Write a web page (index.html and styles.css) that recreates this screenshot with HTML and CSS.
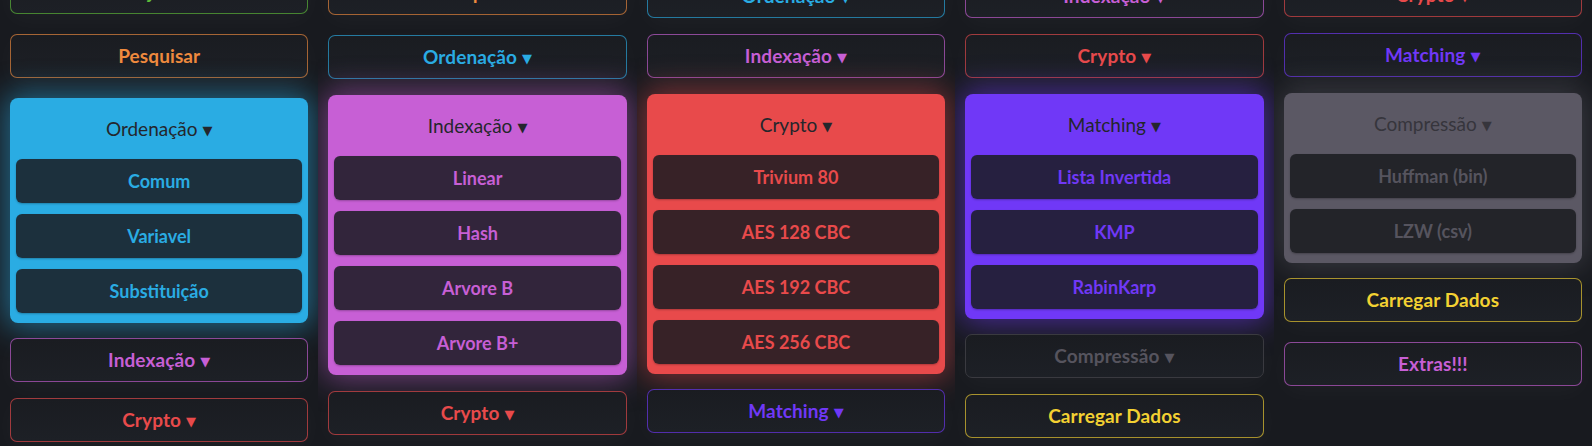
FILE: index.html
```html
<!DOCTYPE html>
<html lang="pt">
<head>
<meta charset="utf-8">
<title>Menu</title>
<link rel="stylesheet" href="styles.css">
</head>
<body>
<div class="stage">
  <section class="panel p1">
    <ul class="menu">
      <li><button class="btn c-green">Ajuda</button></li>
      <li class="plus"><button class="btn c-orange">Pesquisar</button></li>
      <li class="plus drop c-blue">
        <div class="drop-head">Ordenação <span class="caret">▼</span></div>
        <div class="drop-item">Comum</div>
        <div class="drop-item">Variavel</div>
        <div class="drop-item">Substituição</div>
      </li>
      <li><button class="btn c-magenta">Indexação <span class="caret">▼</span></button></li>
      <li><button class="btn c-red">Crypto <span class="caret">▼</span></button></li>
    </ul>
  </section>
  <section class="panel p2">
    <ul class="menu">
      <li><button class="btn c-orange">Pesquisar</button></li>
      <li class="plus"><button class="btn c-blue">Ordenação <span class="caret">▼</span></button></li>
      <li class="drop c-magenta tall">
        <div class="drop-head">Indexação <span class="caret">▼</span></div>
        <div class="drop-item">Linear</div>
        <div class="drop-item">Hash</div>
        <div class="drop-item">Arvore B</div>
        <div class="drop-item">Arvore B+</div>
      </li>
      <li><button class="btn c-red">Crypto <span class="caret">▼</span></button></li>
    </ul>
  </section>
  <section class="panel p3">
    <ul class="menu">
      <li><button class="btn c-blue">Ordenação <span class="caret">▼</span></button></li>
      <li><button class="btn c-magenta">Indexação <span class="caret">▼</span></button></li>
      <li class="drop c-red">
        <div class="drop-head">Crypto <span class="caret">▼</span></div>
        <div class="drop-item">Trivium 80</div>
        <div class="drop-item">AES 128 CBC</div>
        <div class="drop-item">AES 192 CBC</div>
        <div class="drop-item">AES 256 CBC</div>
      </li>
      <li><button class="btn c-purple">Matching <span class="caret">▼</span></button></li>
    </ul>
  </section>
  <section class="panel p4">
    <ul class="menu">
      <li><button class="btn c-magenta">Indexação <span class="caret">▼</span></button></li>
      <li><button class="btn c-red">Crypto <span class="caret">▼</span></button></li>
      <li class="drop c-purple">
        <div class="drop-head">Matching <span class="caret">▼</span></div>
        <div class="drop-item">Lista Invertida</div>
        <div class="drop-item">KMP</div>
        <div class="drop-item">RabinKarp</div>
      </li>
      <li><button class="btn c-gray">Compressão <span class="caret">▼</span></button></li>
      <li><button class="btn c-yellow">Carregar Dados</button></li>
    </ul>
  </section>
  <section class="panel p5">
    <ul class="menu">
      <li><button class="btn c-red">Crypto <span class="caret">▼</span></button></li>
      <li><button class="btn c-purple">Matching <span class="caret">▼</span></button></li>
      <li class="drop c-gray">
        <div class="drop-head">Compressão <span class="caret">▼</span></div>
        <div class="drop-item">Huffman (bin)</div>
        <div class="drop-item">LZW (csv)</div>
      </li>
      <li><button class="btn c-yellow">Carregar Dados</button></li>
      <li class="plus"><button class="btn c-magenta">Extras!!!</button></li>
    </ul>
  </section>
</div>
</body>
</html>
```

FILE: styles.css
```css
* { box-sizing: border-box; }

html, body {
  margin: 0;
  padding: 0;
  background: #17191e;
  width: 1592px;
  height: 446px;
  overflow: hidden;
}

body {
  font-family: "Lato", "Noto Sans", sans-serif;
}

.stage {
  display: flex;
  width: 1592px;
  height: 446px;
}

.panel {
  flex: 1 1 0;
  min-width: 0;
  height: 446px;
  overflow: hidden;
  padding: 0 10px;
  background: #181a1f;
}

.menu {
  list-style: none;
  margin: 0;
  padding: 0;
  display: flex;
  flex-direction: column;
  gap: 16px;
}

.p1 .menu { margin-top: -30px; }
.p2 .menu { margin-top: -29px; }
.p3 .menu { margin-top: -26px; }
.p4 .menu { margin-top: -26px; }
.p5 .menu { margin-top: -27px; }

.menu > li.plus { margin-top: 4px; }

/* colours */
.c-green   { --c: #5fbf3a; --glow: rgba(95, 191, 58, 0.5); }
.c-orange  { --c: #ef8a3e; --glow: rgba(239, 138, 62, 0.5); }
.c-blue    { --c: #2aace3; --glow: rgba(42, 172, 227, 0.55); }
.c-magenta { --c: #c75fd5; --glow: rgba(199, 95, 213, 0.5); }
.c-red     { --c: #e84a4b; --glow: rgba(232, 74, 75, 0.5); }
.c-purple  { --c: #7038f7; --glow: rgba(112, 56, 247, 0.55); }
.c-gray    { --c: #5b5864; --glow: rgba(120, 118, 128, 0.35); }
.c-yellow  { --c: #f3d132; --glow: rgba(243, 209, 50, 0.4); }

.btn {
  display: flex;
  align-items: center;
  justify-content: center;
  gap: 5px;
  width: 100%;
  height: 44px;
  margin: 0;
  padding: 0 0 2px;
  border: 1px solid var(--c);
  border-color: color-mix(in srgb, var(--c) 65%, transparent);
  border-radius: 7px;
  background: linear-gradient(180deg, #1a1c21 0%, #1d2026 100%);
  color: var(--c);
  font-family: inherit;
  font-size: 19px;
  font-weight: 700;
  letter-spacing: 0.1px;
  box-shadow: 0 6px 24px rgba(255, 255, 255, 0.03);
}

.c-gray.btn { color: #56545e; border-color: #3a3a40; }

.caret {
  font-family: "DejaVu Sans", sans-serif;
  font-size: 13px;
  line-height: 1;
  position: relative;
  top: 2px;
}

.drop {
  background: var(--c);
  border-radius: 8px;
  padding: 10px 6px 10px;
  display: flex;
  flex-direction: column;
  gap: 11px;
  margin-bottom: -1px;
  box-shadow: 0 0 30px 4px var(--glow);
}

.drop.tall { margin-bottom: 0; }

.drop-head {
  height: 40px;
  margin-bottom: -11px;
  display: flex;
  align-items: center;
  justify-content: center;
  gap: 5px;
  color: #24262c;
  font-size: 19px;
  font-weight: 400;
}

.drop-head + .drop-item { margin-top: 11px; }

.drop-item {
  height: 44px;
  display: flex;
  align-items: center;
  justify-content: center;
  border-radius: 6px;
  background: rgba(26, 28, 34, 0.86);
  color: var(--c);
  font-size: 18px;
  font-weight: 700;
  box-shadow: 0 1px 2px rgba(0, 0, 0, 0.25);
}

.c-gray .drop-item { background: rgba(26, 27, 31, 0.85); color: #56545e; }
.c-gray .drop-head { color: #36353c; }
```
